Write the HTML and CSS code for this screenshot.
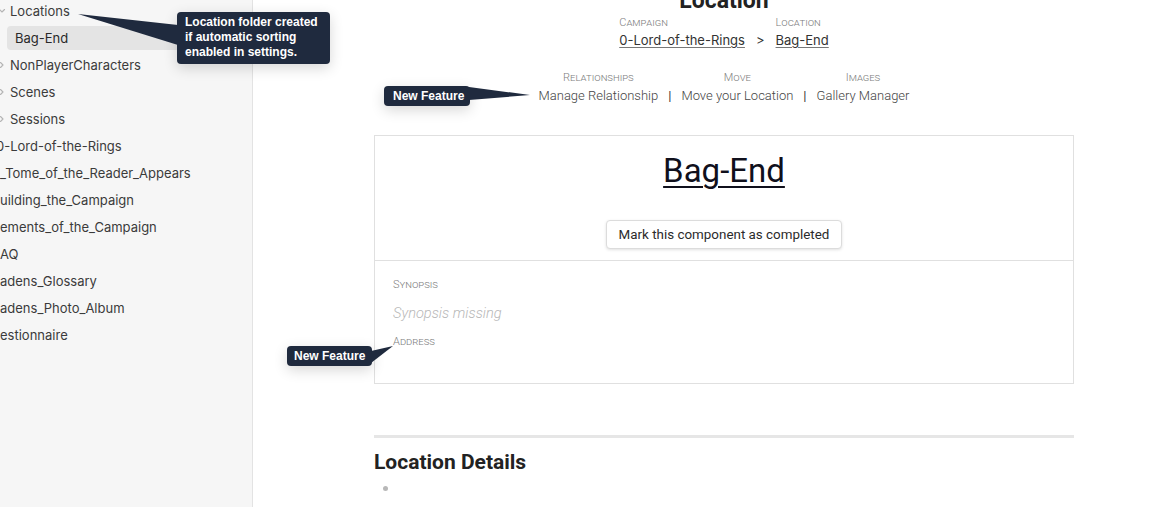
FILE: index.html
```html
<!DOCTYPE html>
<html lang="en">
<head>
<meta charset="utf-8">
<title>Location - Bag-End</title>
<link rel="stylesheet" href="styles.css">
</head>
<body>
<aside class="sidebar">
  <ul class="tree">
    <li class="row folder"><svg class="chev" viewBox="0 0 8 8"><path d="M1.5 2.5 L4 5 L6.5 2.5" /></svg><span>Locations</span></li>
    <li class="row file active"><span>Bag-End</span></li>
    <li class="row folder"><svg class="chev" viewBox="0 0 8 8"><path d="M2.5 1.5 L5 4 L2.5 6.5" /></svg><span>NonPlayerCharacters</span></li>
    <li class="row folder"><svg class="chev" viewBox="0 0 8 8"><path d="M2.5 1.5 L5 4 L2.5 6.5" /></svg><span>Scenes</span></li>
    <li class="row folder"><svg class="chev" viewBox="0 0 8 8"><path d="M2.5 1.5 L5 4 L2.5 6.5" /></svg><span>Sessions</span></li>
    <li class="row top cut"><span>0-Lord-of-the-Rings</span></li>
    <li class="row top"><span>_Tome_of_the_Reader_Appears</span></li>
    <li class="row top"><span>uilding_the_Campaign</span></li>
    <li class="row top"><span>ements_of_the_Campaign</span></li>
    <li class="row top"><span>AQ</span></li>
    <li class="row top"><span>adens_Glossary</span></li>
    <li class="row top"><span>adens_Photo_Album</span></li>
    <li class="row top"><span>estionnaire</span></li>
  </ul>
</aside>

<main class="main">
  <div class="page">
    <h1 class="doc-title">Location</h1>

    <div class="crumbs">
      <div class="crumb">
        <div class="label">Campaign</div>
        <a class="crumb-link" href="#">0-Lord-of-the-Rings</a>
      </div>
      <span class="gt">&gt;</span>
      <div class="crumb">
        <div class="label">Location</div>
        <a class="crumb-link" href="#">Bag-End</a>
      </div>
    </div>

    <div class="actions">
      <div class="action">
        <div class="label">Relationships</div>
        <span class="action-link">Manage Relationship</span>
      </div>
      <span class="sep">|</span>
      <div class="action">
        <div class="label">Move</div>
        <span class="action-link">Move your Location</span>
      </div>
      <span class="sep">|</span>
      <div class="action">
        <div class="label">Images</div>
        <span class="action-link">Gallery Manager</span>
      </div>
    </div>

    <section class="card">
      <div class="card-head">
        <h2 class="card-title"><a href="#">Bag-End</a></h2>
        <button class="complete-btn" type="button">Mark this component as completed</button>
      </div>
      <div class="card-body">
        <div class="label">Synopsis</div>
        <div class="missing">Synopsis missing</div>
        <div class="label">Address</div>
      </div>
    </section>

    <hr class="rule">
    <h2 class="details">Location Details</h2>
    <ul class="bullets"><li class="bullet"></li></ul>
  </div>
</main>

<div class="tip tip-folder">Location folder created<br>if automatic sorting<br>enabled in settings.<svg class="arrow arrow-folder" viewBox="0 0 101 40"><polygon points="1,2 101,13 101,33" /></svg></div>
<div class="tip tip-rel">New Feature<svg class="arrow arrow-rel" viewBox="0 0 62 20"><polygon points="0,1 61,9 0,14" /></svg></div>
<div class="tip tip-addr">New Feature<svg class="arrow arrow-addr" viewBox="0 0 24 20"><polygon points="0,6 22,1 0,18" /></svg></div>
</body>
</html>
```
FILE: styles.css
```css
* { box-sizing: border-box; }

html, body {
  margin: 0;
  padding: 0;
  width: 1150px;
  height: 507px;
  overflow: hidden;
  background: #ffffff;
}

body {
  display: flex;
  font-family: Roboto, "Noto Sans", sans-serif;
  color: #333;
}

/* ---------- sidebar ---------- */
.sidebar {
  width: 253px;
  flex: 0 0 253px;
  height: 507px;
  background: #f6f6f6;
  border-right: 1px solid #e3e3e3;
  overflow: hidden;
  font-family: Inter, "Noto Sans", sans-serif;
  font-size: 13px;
  color: #3b3b3b;
}

.tree {
  list-style: none;
  margin: -1px 0 0 0;
  padding: 0;
  display: flex;
  flex-direction: column;
  gap: 3px;
}

.row {
  height: 24px;
  display: flex;
  align-items: center;
  white-space: nowrap;
}

.chev {
  width: 8px;
  height: 8px;
  margin-left: -2px;
  margin-right: 4px;
  flex: 0 0 8px;
}
.chev path {
  fill: none;
  stroke: #b4b4b4;
  stroke-width: 1.1;
  stroke-linecap: round;
  stroke-linejoin: round;
}

.file { padding-left: 8px; margin: 0 6px 0 7px; border-radius: 4px; }
.active { background: #e4e4e4; color: #2a2a2a; }

.top { padding-left: 0; }
.cut { margin-left: -4px; }

/* ---------- main ---------- */
.main {
  flex: 1;
  height: 507px;
  overflow: hidden;
}

.page {
  width: 700px;
  margin-left: 121px;
  margin-top: -12px;
}

.doc-title {
  margin: 0;
  text-align: center;
  font-size: 23px;
  line-height: 26px;
  font-weight: 700;
  color: #222;
}

.label {
  font-size: 11px;
  line-height: 12px;
  font-weight: 300;
  font-variant: small-caps;
  color: #808080;
}

.crumbs {
  display: flex;
  justify-content: center;
  align-items: flex-end;
  gap: 11px;
  margin-top: 3px;
}
.crumb { display: flex; flex-direction: column; gap: 3px; }
.crumb-link {
  font-family: Inter, "Noto Sans", sans-serif;
  font-size: 13px;
  line-height: 16px;
  color: #333;
  text-decoration: underline;
  text-decoration-color: #777;
  text-underline-offset: 2px;
}
.gt {
  font-family: Inter, "Noto Sans", sans-serif;
  font-size: 13px;
  line-height: 16px;
  color: #333;
}

.actions {
  display: flex;
  justify-content: center;
  align-items: flex-end;
  gap: 10px;
  margin-top: 24px;
}
.action {
  display: flex;
  flex-direction: column;
  align-items: center;
  gap: 4px;
}
.action-link, .sep {
  font-size: 13px;
  line-height: 16px;
  font-weight: 300;
  color: #444;
}
.sep { color: #333; font-weight: 400; }

.card {
  margin-top: 31px;
  border: 1px solid #e0e0e0;
}
.card-head {
  display: flex;
  flex-direction: column;
  align-items: center;
  padding: 16px 0 11px;
  border-bottom: 1px solid #e0e0e0;
}
.card-title {
  margin: 0;
  font-size: 33px;
  line-height: 38px;
  font-weight: 400;
}
.card-title a {
  color: #10101c;
  text-decoration: underline;
  text-decoration-thickness: 2px;
  text-underline-offset: 4px;
}
.complete-btn {
  margin-top: 30px;
  height: 29px;
  padding: 0 12px;
  font-family: Roboto, "Noto Sans", sans-serif;
  font-size: 13.4px;
  color: #2b2b2b;
  background: #fff;
  border: 1px solid #dcdcdc;
  border-radius: 4px;
  box-shadow: 0 1px 3px rgba(0, 0, 0, 0.12);
}

.card-body {
  padding: 17px 18px 34px;
  display: flex;
  flex-direction: column;
}
.card-body .label { line-height: 14px; }
.missing {
  margin: 12px 0 13px;
  font-size: 14.6px;
  line-height: 18px;
  font-weight: 300;
  font-style: italic;
  color: #b8b8b8;
}

.rule {
  margin: 51px 0 0;
  border: 0;
  height: 3px;
  background: #e6e6e6;
}

.details {
  margin: 12px 0 0;
  font-size: 21px;
  line-height: 24px;
  font-weight: 700;
  letter-spacing: 0;
  color: #222;
}

.bullets {
  list-style: none;
  margin: 12px 0 0;
  padding: 0 0 0 9px;
}
.bullet {
  width: 5px;
  height: 5px;
  border-radius: 50%;
  background: #b8b8b8;
}

/* ---------- tour tooltips ---------- */
.tip {
  position: absolute;
  background: #1f2a3e;
  color: #fff;
  font-family: "Liberation Sans", Arial, sans-serif;
  font-weight: 700;
  font-size: 12px;
  border-radius: 4px;
  box-shadow: 0 4px 14px rgba(0, 0, 0, 0.16);
  white-space: nowrap;
}
.tip .arrow { position: absolute; }
.tip .arrow polygon { fill: #1f2a3e; }

.tip-folder {
  left: 177px;
  top: 12px;
  width: 153px;
  height: 52px;
  padding: 3px 8px;
  line-height: 15px;
}
.arrow-folder { left: -100px; top: 0; width: 101px; height: 40px; }

.tip-rel {
  left: 384px;
  top: 86px;
  width: 86px;
  height: 20px;
  padding: 3px 0 0 9px;
  line-height: 14px;
}
.arrow-rel { left: 85px; top: 0; width: 62px; height: 20px; }

.tip-addr {
  left: 287px;
  top: 346px;
  width: 85px;
  height: 20px;
  padding: 3px 0 0 7px;
  line-height: 14px;
}
.arrow-addr { left: 84px; top: -1px; width: 24px; height: 20px; }
```
